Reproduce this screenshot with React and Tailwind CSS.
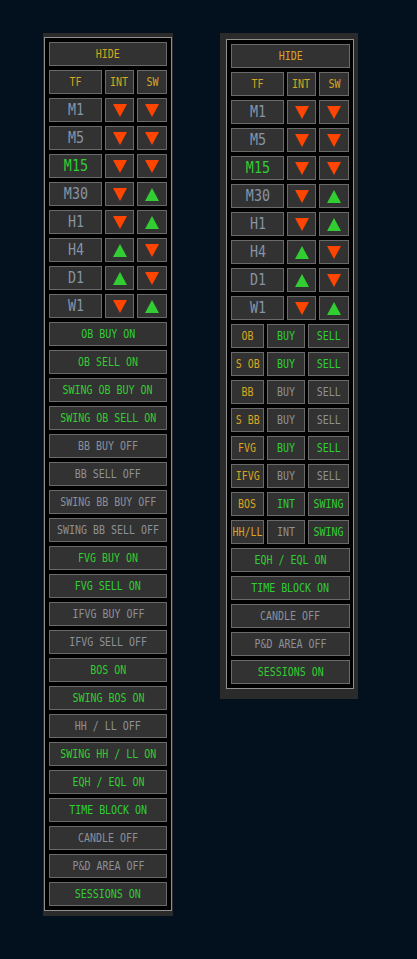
import React from 'react'

const GOLD = 'text-[#daa520]'
const GREEN = 'text-[#32cd32]'
const GRAY = 'text-[#8c9099]'
const SLATE = 'text-[#8594a6]'

const timeframes = [
  ['M1', false, 'down', 'down'],
  ['M5', false, 'down', 'down'],
  ['M15', true, 'down', 'down'],
  ['M30', false, 'down', 'up'],
  ['H1', false, 'down', 'up'],
  ['H4', false, 'up', 'down'],
  ['D1', false, 'up', 'down'],
  ['W1', false, 'down', 'up'],
]

const toggles = [
  ['OB BUY ON', true],
  ['OB SELL ON', true],
  ['SWING OB BUY ON', true],
  ['SWING OB SELL ON', true],
  ['BB BUY OFF', false],
  ['BB SELL OFF', false],
  ['SWING BB BUY OFF', false],
  ['SWING BB SELL OFF', false],
  ['FVG BUY ON', true],
  ['FVG SELL ON', true],
  ['IFVG BUY OFF', false],
  ['IFVG SELL OFF', false],
  ['BOS ON', true],
  ['SWING BOS ON', true],
  ['HH / LL OFF', false],
  ['SWING HH / LL ON', true],
]

const extras = [
  ['EQH / EQL ON', true],
  ['TIME BLOCK ON', true],
  ['CANDLE OFF', false],
  ['P&D AREA OFF', false],
  ['SESSIONS ON', true],
]

// compact grid: label, [text, on], [text, on]
const compact = [
  ['OB', ['BUY', true], ['SELL', true]],
  ['S OB', ['BUY', true], ['SELL', true]],
  ['BB', ['BUY', false], ['SELL', false]],
  ['S BB', ['BUY', false], ['SELL', false]],
  ['FVG', ['BUY', true], ['SELL', true]],
  ['IFVG', ['BUY', false], ['SELL', false]],
  ['BOS', ['INT', true], ['SWING', true]],
  ['HH/LL', ['INT', false], ['SWING', true]],
]

function Cell({ children, color, big, className = '' }) {
  return (
    <div className={`h-[24px] flex items-center justify-center bg-[#323232] border border-[#6a6a6a] overflow-visible ${className}`}>
      <span
        className={`inline-block whitespace-nowrap scale-x-[0.81] leading-none ${big ? 'text-[16.5px]' : 'text-[12.3px]'} ${color}`}
        style={{ fontFamily: '"DejaVu Sans Mono", monospace' }}
      >
        {children}
      </span>
    </div>
  )
}

function Arrow({ dir }) {
  return (
    <div className="h-[24px] flex items-center justify-center bg-[#323232] border border-[#6a6a6a]">
      <svg width="14" height="13" viewBox="0 0 14 13">
        {dir === 'down'
          ? <polygon points="0,0 14,0 7,13" fill="#ff4500" />
          : <polygon points="7,0 14,13 0,13" fill="#32cd32" />}
      </svg>
    </div>
  )
}

function Header() {
  return (
    <>
      <Cell color={GOLD}>HIDE</Cell>
      <div className="grid grid-cols-[53px_29px_30px] gap-x-[3px]">
        <Cell color={GOLD}>TF</Cell>
        <Cell color={GOLD}>INT</Cell>
        <Cell color={GOLD}>SW</Cell>
      </div>
      {timeframes.map(([tf, active, a, b]) => (
        <div key={tf} className="grid grid-cols-[53px_29px_30px] gap-x-[3px]">
          <Cell big color={active ? GREEN : SLATE}>{tf}</Cell>
          <Arrow dir={a} />
          <Arrow dir={b} />
        </div>
      ))}
    </>
  )
}

export default function App() {
  return (
    <div className="min-h-screen bg-[#03101d] flex items-start pt-[33px] pl-[43px] gap-[47px]">
      {/* full panel */}
      <div className="w-[130px] bg-[#2b2b2b] pl-[1px] pr-[1px] pt-[4px] pb-[5px]">
        <div className="bg-black border border-[#8f8f8f] p-[4px] flex flex-col gap-[4px]">
          <Header />
          {toggles.concat(extras).map(([label, on]) => (
            <Cell key={label} color={on ? GREEN : GRAY}>{label}</Cell>
          ))}
        </div>
      </div>

      {/* compact panel */}
      <div className="w-[138px] bg-[#2b2b2b] pl-[6px] pr-[4px] pt-[6px] pb-[10px]">
        <div className="bg-black border border-[#8f8f8f] pl-[4px] pr-[3px] py-[4px] flex flex-col gap-[4px]">
          <Header />
          {compact.map(([label, a, b]) => (
            <div key={label} className="grid grid-cols-[33px_38px_41px] gap-x-[3px]">
              <Cell color={GOLD}>{label}</Cell>
              <Cell color={a[1] ? GREEN : GRAY}>{a[0]}</Cell>
              <Cell color={b[1] ? GREEN : GRAY}>{b[0]}</Cell>
            </div>
          ))}
          {extras.map(([label, on]) => (
            <Cell key={label} color={on ? GREEN : GRAY}>{label}</Cell>
          ))}
        </div>
      </div>
    </div>
  )
}
